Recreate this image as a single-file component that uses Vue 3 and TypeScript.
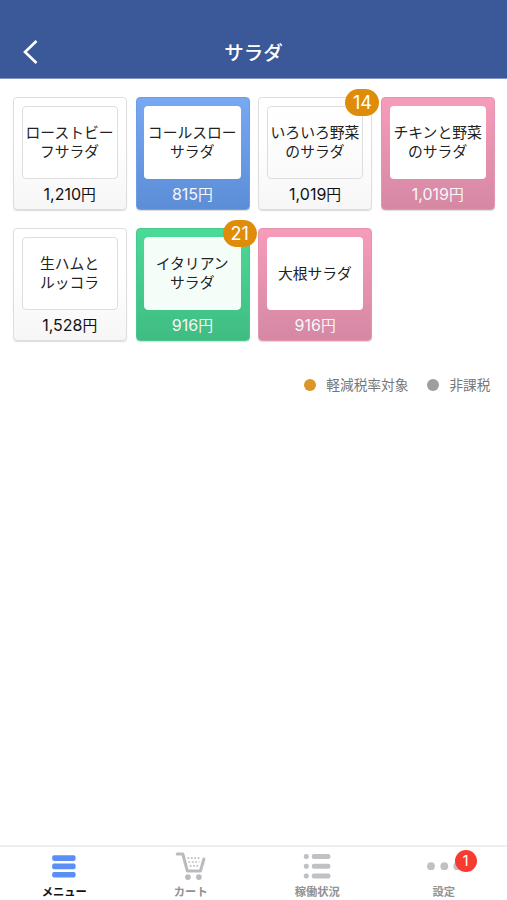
<script setup lang="ts">
interface Item {
  lines: string[]
  price: string
  tone: 'plain' | 'blue' | 'pink' | 'green'
  count?: number
}

interface Tab {
  id: 'menu' | 'cart' | 'status' | 'settings'
  label: string
  badge?: number
}

const items: Item[] = [
  { lines: ['ローストビー', 'フサラダ'], price: '1,210', tone: 'plain' },
  { lines: ['コールスロー', 'サラダ'], price: '815', tone: 'blue' },
  { lines: ['いろいろ野菜', 'のサラダ'], price: '1,019', tone: 'plain', count: 14 },
  { lines: ['チキンと野菜', 'のサラダ'], price: '1,019', tone: 'pink' },
  { lines: ['生ハムと', 'ルッコラ'], price: '1,528', tone: 'plain' },
  { lines: ['イタリアン', 'サラダ'], price: '916', tone: 'green', count: 21 },
  { lines: ['大根サラダ'], price: '916', tone: 'pink' },
]

const tabs: Tab[] = [
  { id: 'menu', label: 'メニュー' },
  { id: 'cart', label: 'カート' },
  { id: 'status', label: '稼働状況' },
  { id: 'settings', label: '設定', badge: 1 },
]
</script>

<template>
  <div class="screen">
    <header class="header">
      <button class="back" aria-label="戻る">
        <svg width="16" height="26" viewBox="0 0 16 26">
          <path d="M14.5 2 L3 13 L14.5 24" fill="none" stroke="#fff" stroke-width="2.6" />
        </svg>
      </button>
      <h1 class="title">サラダ</h1>
    </header>

    <main class="content">
      <div class="grid">
        <div
          v-for="(item, i) in items"
          :key="i"
          class="card"
          :class="[item.tone, { selected: item.count }]"
        >
          <div class="name">
            <span v-for="line in item.lines" :key="line">{{ line }}</span>
          </div>
          <div class="price">{{ item.price }}<span class="yen">円</span></div>
          <span v-if="item.count" class="count">{{ item.count }}</span>
        </div>
      </div>
      <div class="legend">
        <span class="key"><i class="dot reduced"></i>軽減税率対象</span>
        <span class="key"><i class="dot exempt"></i>非課税</span>
      </div>
    </main>

    <nav class="tabs">
      <div v-for="tab in tabs" :key="tab.id" class="tab" :class="{ active: tab.id === 'menu' }">
        <div class="icon">
          <svg v-if="tab.id === 'menu'" width="32" height="30" viewBox="0 0 32 30" fill="#5b8ff5">
            <rect x="4.2" y="4.3" width="23.4" height="5.6" rx="1.8" />
            <rect x="4.2" y="12.6" width="23.4" height="5.6" rx="1.8" />
            <rect x="4.2" y="20.9" width="23.4" height="5.6" rx="1.8" />
          </svg>
          <svg v-else-if="tab.id === 'cart'" width="32" height="30" viewBox="0 0 32 30">
            <path
              d="M2.2 3 H7.8 L12.4 20.1 H25.4 L28.9 8"
              fill="none"
              stroke="#babbbe"
              stroke-width="3"
              stroke-linecap="round"
              stroke-linejoin="round"
            />
            <g fill="none" stroke="#bcbdc0" stroke-width="1.7" stroke-dasharray="1.7 1.7">
              <path d="M12.5 7.2 H25" />
              <path d="M13.5 11 H24.5" />
              <path d="M14.7 14.8 H23.2" />
            </g>
            <circle cx="12.9" cy="26.1" r="2.9" fill="#babbbe" />
            <circle cx="23.9" cy="26.1" r="2.9" fill="#babbbe" />
          </svg>
          <svg v-else-if="tab.id === 'status'" width="32" height="30" viewBox="0 0 32 30" fill="#bfc1c4">
            <rect x="2.8" y="3" width="5" height="5" rx="2" />
            <rect x="10.8" y="3" width="18.6" height="5" rx="2" />
            <rect x="2.8" y="12.7" width="5" height="5" rx="2" />
            <rect x="10.8" y="12.7" width="18.6" height="5" rx="2" />
            <rect x="2.8" y="22.4" width="5" height="5" rx="2" />
            <rect x="10.8" y="22.4" width="18.6" height="5" rx="2" />
          </svg>
          <svg v-else width="36" height="30" viewBox="0 0 36 30" fill="#bfc1c4">
            <circle cx="5" cy="15.2" r="3.9" />
            <circle cx="18.3" cy="15.2" r="3.9" />
            <circle cx="31.3" cy="15.2" r="3.9" />
          </svg>
          <span v-if="tab.badge" class="alert">{{ tab.badge }}</span>
        </div>
        <span class="label">{{ tab.label }}</span>
      </div>
    </nav>
  </div>
</template>

<style>
body {
  background: #fff;
}
</style>

<style scoped>
.screen {
  display: flex;
  flex-direction: column;
  width: 507px;
  height: 900px;
  overflow: hidden;
  background: #fff;
  color: #222;
  font-family: Inter, 'Noto Sans CJK JP', sans-serif;
}
.header {
  box-sizing: border-box;
  flex: none;
  display: grid;
  grid-template-columns: 60px 1fr 60px;
  align-items: center;
  height: 79px;
  padding-top: 26px;
  background: #3b5998;
  border-bottom: 1px solid #8294c3;
}
.back {
  display: flex;
  padding: 0 0 0 22px;
  border: 0;
  background: none;
}
.title {
  margin: 2px 0 0;
  text-align: center;
  color: #fff;
  font-size: 19.5px;
  font-weight: 500;
  line-height: 26px;
}
.content {
  flex: 1;
  padding: 18px 12px 0 13px;
}
.grid {
  display: grid;
  grid-template-columns: repeat(4, 114px);
  column-gap: 8.7px;
  row-gap: 18px;
}
.card {
  position: relative;
  box-sizing: border-box;
  height: 113px;
  padding: 8px 8px 8px 7.5px;
  border: 1px solid #dedede;
  border-radius: 4px;
  background: linear-gradient(#fff 40%, #f6f6f6);
  box-shadow: 0 1px 1px rgba(0, 0, 0, 0.14);
}
.blue {
  border-color: #6c9ce5;
  background: linear-gradient(#77a8f1, #5c8ed8);
}
.pink {
  border-color: #e295b2;
  background: linear-gradient(#f79cbb, #d588a3);
}
.green {
  border-color: #45c98c;
  background: linear-gradient(#4bda98, #40bc82);
}
.name {
  box-sizing: border-box;
  display: flex;
  flex-direction: column;
  align-items: center;
  justify-content: center;
  height: 73px;
  padding: 1px 0.4px 0 0;
  border: 1px solid #dedede;
  border-radius: 4px;
  background: #fff;
  font-size: 14.8px;
  line-height: 19px;
  white-space: nowrap;
}
.blue .name,
.pink .name,
.green .name {
  border-color: transparent;
}
.plain.selected .name {
  background: linear-gradient(#fff, #fafafa);
}
.green.selected .name {
  border-color: #f3fbf7;
  background: #f5fdf9;
}
.price {
  margin-top: 5px;
  text-align: center;
  color: #111;
  font-size: 16px;
  line-height: 20px;
}
.yen {
  font-size: 14.8px;
}
.blue .price,
.pink .price,
.green .price {
  color: #f6f6fa;
}
.count {
  position: absolute;
  top: -9px;
  right: -8px;
  width: 34px;
  height: 27px;
  border-radius: 14px;
  background: #e08c0b;
  color: #fff;
  font-size: 18px;
  line-height: 27px;
  text-align: center;
}
.legend {
  display: flex;
  justify-content: flex-end;
  gap: 19px;
  margin-top: 34px;
  padding-right: 4.5px;
  color: #777;
  font-size: 13.7px;
  line-height: 20px;
}
.key {
  display: flex;
  align-items: center;
}
.dot {
  width: 12px;
  height: 12px;
  margin-right: 10px;
  border-radius: 50%;
}
.reduced {
  background: #dc9628;
}
.exempt {
  background: #9e9e9e;
}
.tabs {
  box-sizing: border-box;
  flex: none;
  display: grid;
  grid-template-columns: repeat(4, 1fr);
  height: 55px;
  padding-left: 1px;
  border-top: 2px solid #eee;
}
.tab {
  display: flex;
  flex-direction: column;
  align-items: center;
  padding-top: 4px;
  color: #929292;
}
.active {
  color: #111;
}
.icon {
  position: relative;
  display: flex;
  height: 30px;
}
.alert {
  position: absolute;
  top: -1.5px;
  left: 28.8px;
  width: 22px;
  height: 22px;
  border-radius: 50%;
  background: #f83b30;
  color: #fff;
  font-size: 15px;
  line-height: 22px;
  text-align: center;
}
.label {
  margin-top: 3px;
  font-size: 11.3px;
  font-weight: 600;
  line-height: 16px;
}
</style>
